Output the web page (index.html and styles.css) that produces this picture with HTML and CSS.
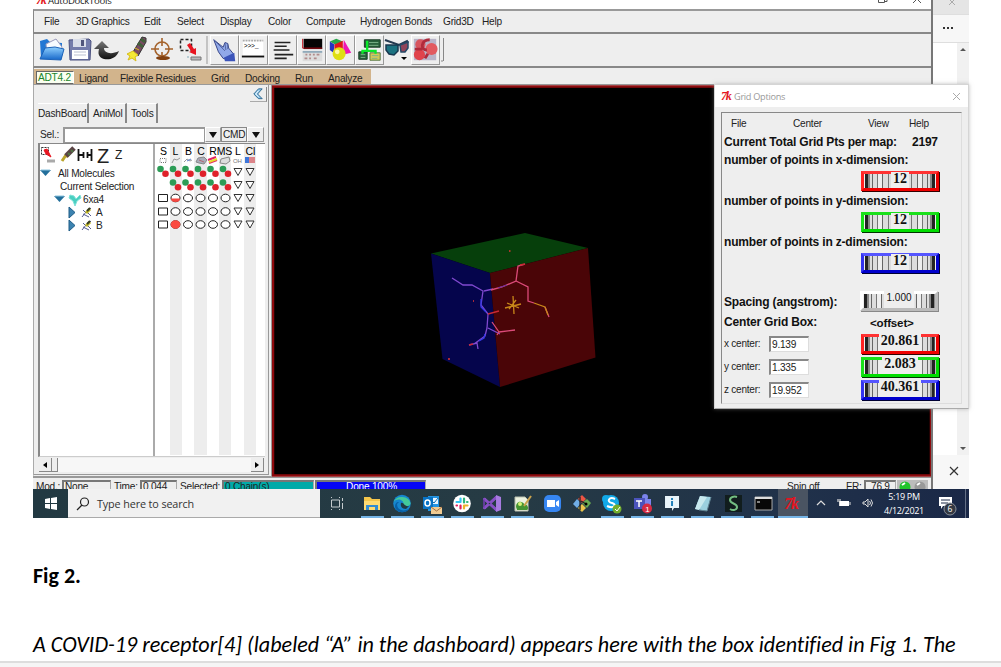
FILE: index.html
```html
<!DOCTYPE html>
<html lang="en">
<head>
<meta charset="utf-8">
<title>Fig 2</title>
<link rel="stylesheet" href="styles.css">
</head>
<body>
<main class="page">
<section class="shot">
  <div class="desktop">
    <div class="app">
      <header class="title"><i class="tk">7k</i><span>AutoDockTools</span>
        <svg class="winctl" width="60" height="9" viewBox="870 0 60 9"><path d="M877.500 0v2.500h6V0M884 1.500h2V0M912 3l4-4 4 4" fill="none" stroke="#555"/></svg>
      </header>
      <nav class="menu"><span class="w32">File</span><span class="w68">3D Graphics</span><span class="w33">Edit</span><span class="w43">Select</span><span class="w48">Display</span><span class="w38">Color</span><span class="w54">Compute</span><span class="w83">Hydrogen Bonds</span><span class="w39">Grid3D</span><span>Help</span></nav>
      <div class="tools">
        <svg width="173" height="30" viewBox="36 35 173 30">
          <defs><linearGradient id="fo" x2="0" y2="1"><stop stop-color="#8fd0ff"/><stop offset="1" stop-color="#1667c9"/></linearGradient>
          <linearGradient id="ar" x2="0" y2="1"><stop stop-color="#777"/><stop offset="1" stop-color="#111"/></linearGradient></defs>
          <path d="M39 41l7-2 3 3 12 1v15H40z" fill="#2277d4"/><path d="M45 44l10-5 6 8-1 7-14 1z" fill="#f7fbff" stroke="#99b"/><path d="M39 59l5-11 10-1 9 2-3 11z" fill="url(#fo)" stroke="#1c62b8"/>
          <path d="M68 40l20-1 2 2-1 19H69z" fill="#737cab" stroke="#4c5280"/><path d="M72 39h13v8H72z" fill="#d8dde9"/><path d="M80 40h3v6h-3z" fill="#50567c"/><path d="M71 50h16v9H71z" fill="#fff"/><path d="M73 52h12M73 55h12" stroke="#b9bfd0"/>
          <path d="M93 49l8-8 7 7h-5c0 5 7 7 15 3-3 8-10 9-15 8-6-2-6-6-5-10z" fill="url(#ar)"/>
          <path d="M132 52l9-15 4 1v4l-8 14z" fill="#7a4b63" stroke="#333"/><path d="M137 43l5 4M140 39l4 3" stroke="#42603a" stroke-width="3"/><path d="M126 54l6-3 5 4-3 2 1 4-4-3-4 2 2-4zM134 48l4 2" fill="#f5e935" stroke="#d7bd1d"/>
          <g fill="none" stroke="#a4622b" stroke-width="1.600"><circle cx="161" cy="49" r="7"/><path d="M161 38v8M161 52v8M150 49h8M164 49h8"/></g><ellipse cx="162" cy="58" rx="7" ry="2" fill="#82400f"/>
          <path d="M179.500 39.500h11v11h-11z" fill="none" stroke="#222" stroke-width="1.500" stroke-dasharray="3 2"/><path d="M186 45l3-2 4 6 2-1 0 7-7-3 2-1z" fill="#e81520"/><path d="M190 57h10v3h-10z" fill="#b7b9bb" stroke="#777"/><path d="M186 57h2" stroke="#81aaba"/><path d="M206 36v28" stroke="#999"/>
        </svg>
        <svg class="btn" width="29" height="30" viewBox="0 0 29 30"><path d="M3 4l10 8 2-5 3 1 1 5 5 6-3 7-8-2-5-7z" fill="#91a9e9" stroke="#303e83"/><path d="M3 4l12 12M15 8l1 7M18 9l0 5" stroke="#52639f"/><path d="M14 23l11-5 1 9H15z" fill="#3c55ba"/></svg>
        <svg class="btn" width="29" height="30" viewBox="0 0 29 30"><path d="M3 5h22v18H3z" fill="#fff"/><path d="M3 5h22" stroke="#aaa" stroke-width="2" stroke-dasharray="2 1"/><path d="M2 22h24" stroke="#111" stroke-width="2"/><text x="4" y="13" font-size="7" font-family="Liberation Mono">&gt;&gt;&gt;_</text></svg>
        <svg class="btn" width="29" height="30" viewBox="0 0 29 30"><path d="M6 7h17M6 11h13M5 15h17M6 20h20M6 24h13" stroke="#222" stroke-width="1.700"/></svg>
        <svg class="btn" width="29" height="30" viewBox="0 0 29 30"><path d="M6 3h20v11H6z" fill="#050505"/><path d="M5 3v10h21" fill="none" stroke="#c00b15"/><path d="M5 17h21v10H5z" fill="#ddd"/><path d="M5 17h21" stroke="#91aaba" stroke-width="2"/><path d="M8 20h2m2 0h2m2 0h2m2 0h3M7 24h3m2 0h2m3 0h3" stroke="#b18c8c" stroke-width="2"/></svg>
        <svg class="btn" width="29" height="30" viewBox="0 0 29 30"><path d="M3 6l7-3 7 3-7 4z" fill="#29a64a"/><path d="M3 6l5 3-1 9-4-3z" fill="#2334bf"/><path d="M8 9l9-4v12l-9 1z" fill="#df161c"/><path d="M18 4l8 14-9 2z" fill="#ef16b4"/><circle cx="13" cy="19" r="7" fill="#dede14"/><circle cx="11" cy="17" r="2.500" fill="#fff9a4"/></svg>
        <svg class="btn" width="29" height="30" viewBox="0 0 29 30"><path d="M9 4h17v8H9zM3 17h9v8H3z" fill="#28613b" stroke="#173822"/><path d="M15 18h11v8H15z" fill="#cfc95a" stroke="#574"/><path d="M12 5v11M7 19v-3h14v3" stroke="#0be929" stroke-width="2.500" fill="none"/><path d="M14 7h10M14 10h10M5 20h5M5 23h5M17 21h7M17 24h6" stroke="#7db48a"/></svg>
        <svg width="27" height="30" viewBox="0 0 27 30"><path d="M1 5l14 5 8-4 1 2" fill="none" stroke="#263a50" stroke-width="2"/><path d="M2 10l12 0 0 6-4 4-5-1-3-4z" fill="#1b7280" stroke="#18384f" stroke-width="1.500"/><path d="M16 10l8-3 0 6-3 4-4 0z" fill="#91455a" stroke="#244967" stroke-width="1.500"/><path d="M17 22h6l-3 3z"/></svg>
        <svg class="btn" width="29" height="30" viewBox="0 0 29 30"><path d="M2 3h24v23H2z" fill="#b9b4c8"/><circle cx="9" cy="9" r="5.500" fill="#d8555f"/><circle cx="8" cy="20" r="6" fill="#e0434c"/><circle cx="21" cy="14" r="6.500" fill="#e25a60"/><path d="M19 4q-7 0-8 6 0 5 5 5M3 14h8M17 19l-3 5" stroke="#b02a3b" stroke-width="3" fill="none"/></svg>
        <svg width="8" height="30"><path d="M3.500 3v23M3 26h-2" stroke="#888" fill="none"/></svg>
      </div>
      <div class="modules"><div class="tan"><b>ADT4.2</b><span class="w41">Ligand</span><span class="w91">Flexible Residues</span><span class="w34">Grid</span><span class="w50">Docking</span><span class="w33">Run</span><span>Analyze</span></div></div>
      <div class="work">
        <aside class="panel">
          <div class="collapse"><svg width="17" height="15" viewBox="0 0 17 15"><path d="M9 2L4 7.500l5 5h4l-5-5 5-5.500z" fill="#91caef" stroke="#28638a"/><path d="M9 4l-3 3.500 3 3" fill="none" stroke="#fff"/></svg></div>
          <div class="ptabs"><span class="t1">DashBoard</span><span class="t2">AniMol</span><span class="t3">Tools</span></div>
          <div class="sel"><span>Sel.:</span><div class="entry"></div><div class="drop"><svg width="8" height="6"><path d="M0 0h8L4 6z" fill="#111"/></svg></div><div class="cmd">CMD</div><div class="drop"><svg width="8" height="6"><path d="M0 0h8L4 6z" fill="#111"/></svg></div></div>
          <div class="board">
            <div class="tree">
              <div class="minis">
                <svg width="54" height="23" viewBox="40 144 54 23"><path d="M41.500 147.500h7v7h-7z" fill="none" stroke="#333" stroke-dasharray="2 1"/><path d="M44 150l3-1 4 8-5-3z" fill="#e81520" stroke="#e81520"/><path d="M47 161h8" stroke="#aaa" stroke-width="3"/><path d="M62 161l4-6M66 157l7-8" stroke="#bba52c" stroke-width="3"/><path d="M66 156l8-8" stroke="#5a4345" stroke-width="5"/><path d="M68 153l2 2M71 150l2 2" stroke="#507645" stroke-width="2"/><path d="M78.500 149v12M79 155h5M83.500 152v6M91.500 149v12M91 155h-4M87.500 152v6" stroke="#111" stroke-width="1.800"/></svg>
                <span class="z1">Z</span><span class="z2">Z</span>
              </div>
              <div class="row r0"><svg class="tri"><use href="#dn"/></svg>All Molecules</div>
              <div class="row r1">Current Selection</div>
              <div class="row r2"><svg class="tri"><use href="#dn"/></svg><svg width="14" height="13"><path d="M2 2l4 1 2 3 4-4 1 3-4 3-2 5-2-5-4-3z" fill="#49cfc0" stroke="#7de0d8"/></svg><span>6xa4</span></div>
              <div class="row r3"><svg class="tri"><use href="#rt"/></svg><svg class="mol"><use href="#mol"/></svg>A</div>
              <div class="row r3"><svg class="tri"><use href="#rt"/></svg><svg class="mol"><use href="#mol"/></svg>B</div>
            </div>
            <svg class="matrix" width="108" height="311" viewBox="155 144 108 311">
              <defs>
                <g id="dn"><path d="M0 3h11L5.500 9z" fill="#236f9b"/><path d="M1 3h9" stroke="#8dc5df"/></g>
                <g id="rt"><path d="M3 1l6 5.500L3 12z" fill="#3c83b0" stroke="#1e5c86"/></g>
                <g id="mol"><path d="M2 11l4-5 5-4M6 7l-3-3M7 6l4 4M3 8l6 3" stroke="#555b91" fill="none"/><path d="M6 7l4-4" stroke="#bdb425" stroke-width="3"/><path d="M7 5l3-3" stroke="#343a25" stroke-width="2"/></g>
                <g id="dots"><circle cx="-2.500" cy="-2.500" r="3.300" fill="#2c9c56"/><circle cx="2.500" cy="2.200" r="3.300" fill="#df222b"/></g>
                <ellipse id="o" rx="4.500" ry="3.800" fill="#fff" stroke="#222"/>
                <path id="v" d="M-4-3.500h8L0 3.500z" fill="#fff" stroke="#333"/>
                <path id="sq" d="M-4.500-3.500h9v7h-9z" fill="#fff" stroke="#222"/>
              </defs>
              <path d="M170 144h12v312h-12zM194 144h13v312h-13zM219 144h12v312h-12zM244 144h12v312h-12z" fill="#ededed"/>
              <g class="cols"><text x="163.500" y="155">S</text><text x="175.500" y="155">L</text><text x="188.500" y="155">B</text><text x="201" y="155">C</text><text x="213" y="155">R</text><text x="224.500" y="155">MS</text><text x="238" y="155">L</text><text x="250.500" y="155">Cl</text></g>
              <g fill="none"><path d="M160 158.500h6v4h-6z" stroke="#777" stroke-dasharray="1 1"/><path d="M172 163l2-4 3 1 3-2M184 162l3-3 3 2 2-1" stroke="#999"/><path d="M187 161l4-2" stroke="#587bd0"/><path d="M196 162l2-4 6-1 3 3-3 4-5-1z" fill="#a9adba" stroke="#888"/><path d="M199 160l5 2" stroke="#b56572"/><path d="M208 160l8-3M209 163l8-3" stroke="#e42363" stroke-width="2"/><path d="M209 162l8-3" stroke="#e4db2d" stroke-width="2"/><path d="M220 163l1-4 8-2 1 4-4 3z" stroke="#888" fill="#ddd"/><path d="M245 157h10v6h-10z" fill="#3d76da"/><path d="M249 157h6v6h-6z" fill="#dc8489"/></g><text x="233" y="163" font-size="6" fill="#777" font-family="Liberation Sans">OH</text>
              <g><use href="#dots" x="163" y="171.500"/><use href="#dots" x="175.500" y="171.500"/><use href="#dots" x="188" y="171.500"/><use href="#dots" x="200.500" y="171.500"/><use href="#dots" x="213" y="171.500"/><use href="#dots" x="225.500" y="171.500"/>
              <use href="#dots" x="175.500" y="185"/><use href="#dots" x="188" y="185"/><use href="#dots" x="200.500" y="185"/><use href="#dots" x="213" y="185"/><use href="#dots" x="225.500" y="185"/></g>
              <g id="line"><use href="#sq" x="163" y="198"/><use href="#o" x="175.500" y="198"/><use href="#o" x="188" y="198"/><use href="#o" x="200.500" y="198"/><use href="#o" x="213" y="198"/><use href="#o" x="225.500" y="198"/></g>
              <use href="#line" y="13.500"/><use href="#line" y="26.500"/>
              <g id="vv"><use href="#v" x="238" y="172"/><use href="#v" x="250" y="172"/></g><use href="#vv" y="13"/><use href="#vv" y="26"/><use href="#vv" y="39.500"/><use href="#vv" y="52.500"/>
              <path d="M171 198.500h9a4.500 3.500 0 0 1-9 0z" fill="#f54740"/><ellipse cx="175.500" cy="224.500" rx="4.800" ry="4.200" fill="#fa4a40"/>
            </svg>
          </div>
          <div class="hscroll"><span class="sb"><svg width="4" height="6"><path d="M4 0v6L0 3z"/></svg></span><span class="thumb"></span><span class="trough"></span><span class="sb"><svg width="4" height="6"><path d="M0 0v6l4-3z"/></svg></span></div>
        </aside>
        <svg class="viewer" width="660" height="392" viewBox="272 85 660 392">
          <path d="M273 86.500h658v389H273z" fill="#000" stroke="#8d0b0e" stroke-width="2.500"/>
          <path d="M431 253.500L525 233l63 15-98 25z" fill="#063f0b"/><path d="M431 253.500l59 19.500 10 114-57.500-28z" fill="#05054c"/><path d="M490 273l98-25 7.500 109.500L500 387z" fill="#4a0507"/>
          <g fill="none" stroke-width="1.300"><path d="M452 278l11 7h9l11 6-2 14 7 9-1 14-2 8-11 8M469 345l8-2 1 6M488 328l12 6M484 291l9-2" stroke="#8049cf"/><path d="M481 299v8l5 5M485 334l-1 4-5 3" stroke="#3439e8"/><path d="M491 290l11-3 14-6 2-15 7-2M516 281l12 6v14l6 2M545 307l4 10M499 332l16-2M499 332l-7-10M499 332l-2 3" stroke="#db4b79"/><path d="M498 288l9-3" stroke="#6e319c"/><path d="M488 314l11-3M469 345l4-1M520 265l5-1" stroke="#c92935"/><path d="M534 303l11 4 3 8M513 296l1 18M505 308l16-4M507 303l12 5M516 300l-7 9" stroke="#c88719"/></g>
          <path d="M509 251h1.500M473 301h1M448 359h2" stroke="#e03535" stroke-width="1.500"/>
        </svg>
      </div>
      <footer class="status"><span class="w26">Mod.:</span><span class="sunk w52">None</span><span class="w26">Time:</span><span class="sunk w40">0.044</span><span class="w42">Selected:</span><span class="sunk teal">0 Chain(s)</span><span class="sunk blue">Done 100%</span><span class="spin">Spin off</span><span class="fr">FR:</span><span class="sunk fps">76.9</span><svg width="31" height="12" viewBox="0 0 31 12"><path d="M0 1h31v11H0z" fill="#bcbcbc"/><circle cx="8" cy="8" r="5.500" fill="#20c52b"/><circle cx="23" cy="8" r="5.500" fill="#999"/><path d="M5 6l3-2M20 6l3-2" stroke="#fff" stroke-width="2"/></svg></footer>
    </div>
    <svg class="browser" width="36" height="489" viewBox="933 0 36 489"><path d="M933 0h36v489h-36z" fill="#fff"/><path d="M933 0h36v14h-36z" fill="#e5e5e5"/><path d="M933 14h36v28h-36z" fill="#f7f7f7"/><path d="M933 14.500h36M933 42.500h36" stroke="#dedede"/><path d="M957 43h12v412h-12z" fill="#f1f1f1"/><path d="M933 455h36v34h-36z" fill="#f7f7f7"/><path d="M960 51l3-3 3 3zM960 447l3 3 3-3z" fill="#555"/><path d="M943 27h2v2h-2zM947 27h2v2h-2zM951 27h2v2h-2z" fill="#333"/><path d="M949-1l6 6M955-1l-6 6" stroke="#aaa"/><path d="M950 467l8 8M958 467l-8 8" stroke="#333" stroke-width="1.200"/></svg>
  </div>
  <div class="taskbar">
    <div class="start"><svg width="35" height="29" viewBox="33 489 35 29"><path d="M45 499l5-1v5h-5zM51 498l6-1v6h-6zM45 504h5v5l-5-1zM51 504h6v6l-6-1z" fill="#fff"/></svg></div>
    <div class="search"><svg width="29" height="29" viewBox="68 489 29 29"><circle cx="84.500" cy="502" r="4" fill="none" stroke="#222" stroke-width="1.200"/><path d="M82 505l-5 5" stroke="#222" stroke-width="1.300"/></svg>Type here to search</div>
    <svg class="view" width="37" height="29" viewBox="0 0 36 29"><path d="M11 11h8v7h-8zM11 8v1m8-1v1M11 20v1m8-1v1M22 9v3m0 2v6" fill="none" stroke="#c5cbce"/></svg>
    <div class="pins">
      <svg class="pin on" viewBox="0 0 30 29"><path d="M7 8h6l2 2h8v11H7z" fill="#f5c64b"/><path d="M7 12h16v9H7z" fill="#ffdb72"/><path d="M9 21v-5h12v5h-3v-3h-6v3z" fill="#328cd2"/></svg>
      <svg class="pin on" viewBox="0 0 30 29"><circle cx="15" cy="14.500" r="8.800" fill="#1686ce"/><path d="M6.500 13a9 8 0 0 1 17 1c0 4-7 4-7 1 0-5-7-6-10-2z" fill="#43c99a"/><path d="M10 15c0 6 6 8 12 5-3 5-13 4-14-2 0-3 1-5 4-5z" fill="#0860a5"/><path d="M14 14c3-1 3 4 8 3l-3 3c-4 0-6-3-5-6z" fill="#213a43"/></svg>
      <svg class="pin on" viewBox="0 0 30 29"><path d="M11 7h11v15H11z" fill="#2494e2"/><path d="M14 9h7v6h-7z" fill="#e8f5ff"/><path d="M6 8h10v12H6z" fill="#0872c4"/><ellipse cx="10.500" cy="14" rx="2.500" ry="3" fill="none" stroke="#fff" stroke-width="1.500"/><path d="M14 18h11v7H14z" fill="#f1cb91"/><path d="M14 18l5.500 4 5.500-4" stroke="#a17043" fill="none"/><path d="M15 12l2 2 4-5" stroke="#0b6eb5" fill="none"/></svg>
      <svg class="pin on" viewBox="0 0 30 29"><circle cx="15" cy="14.500" r="8.800" fill="#fff"/><g stroke-width="2.200" stroke-linecap="round"><path d="M13.500 9.500v3M9.500 13h4" stroke="#36c5f0"/><path d="M17 9.500v4M20 13h.5" stroke="#2eb67d"/><path d="M17 19.500v-3M17 16.500h3.500" stroke="#ecb22e"/><path d="M13.500 19.500v-3M9.500 16.500h.5" stroke="#e01e5a"/></g></svg>
      <svg class="pin on" viewBox="0 0 30 29"><path d="M6 10l2-1 12 11-1 2zM6 19l2 1L20 9l-1-2z" fill="#8950c7" stroke="#8950c7"/><path d="M19 6l5 2v13l-5 2z" fill="#a77be0"/><path d="M7 10v9" stroke="#7540b7" stroke-width="1.500"/></svg>
      <svg class="pin on" viewBox="0 0 30 29"><path d="M8 8h10l3 3v11H8z" fill="#edf2df" stroke="#bbc1b0"/><path d="M9 18c0-7 7-6 8-3 4 0 5 5 3 6H10z" fill="#459432"/><circle cx="13" cy="15" r="2" fill="#d6f278"/><path d="M17 17l7-10" stroke="#caa34d" stroke-width="2"/></svg>
      <svg class="pin" viewBox="0 0 30 29"><rect x="7" y="6" width="17" height="17" rx="5" fill="#3686f2"/><path d="M10 11h8v7h-8zM19 13l3-2v7l-3-2z" fill="#fff"/></svg>
      <svg class="pin" viewBox="0 0 30 29"><path d="M15 6l4 4-4 4-4-4z" fill="#ec5544"/><path d="M10 10l4 4-4 5-4-4z" fill="#71aee6"/><path d="M20 10l4 4-4 5-5-5z" fill="#69aa51"/><path d="M15 15l4 4-4 4-4-4z" fill="#eac44b"/><path d="M13 8v13M14 12l5 3" stroke="#222" stroke-width="1.300"/><circle cx="19" cy="15" r="1.500"/></svg>
      <svg class="pin on" viewBox="0 0 30 29"><circle cx="14" cy="14" r="8" fill="#12a9e8"/><circle cx="9" cy="10" r="4" fill="#12a9e8"/><path d="M18 10c-6-3-9 3-3 4 6 2 1 6-5 3" fill="none" stroke="#fff" stroke-width="2"/><circle cx="20" cy="20" r="4.500" fill="#73ae2d"/><path d="M18 20l2 2 3-4" fill="none" stroke="#fff"/></svg>
      <svg class="pin on" viewBox="0 0 30 29"><path d="M15 10h9v10h-9z" fill="#7b83eb"/><circle cx="18" cy="8" r="3" fill="#7b83eb"/><path d="M7 9h11v11H7z" fill="#4b53bc"/><path d="M9 12h6M12 12v6" stroke="#fff" stroke-width="1.500"/><circle cx="20" cy="19.500" r="5" fill="#d52b42"/><text x="18.200" y="22.500" fill="#fff" font-family="Liberation Sans" font-size="8">1</text></svg>
      <svg class="pin on" viewBox="0 0 30 29"><path d="M8 7h14v12h-5l-2 3v-3H8z" fill="#e9f4fa"/><path d="M15 9v2m0 1v5" stroke="#2280b9" stroke-width="2"/></svg>
      <svg class="pin on" viewBox="0 0 30 29"><path d="M12 7l11 1-4 14-12-2z" fill="#9bd0df"/><path d="M12 7l7 1-8 13-4-1z" fill="#c9e9ee"/><path d="M23 8l-4 14-8-1" fill="none" stroke="#5f8291"/></svg>
      <svg class="pin on" viewBox="0 0 30 29"><path d="M7 6h17v17H7z" fill="#111d1d"/><path d="M19 8c-3-1-7 0-7 3 0 4 7 3 7 7 0 3-4 4-7 2" fill="none" stroke="#73be82" stroke-width="2"/></svg>
      <svg class="pin on" viewBox="0 0 30 29"><path d="M7 8h17v13H7z" fill="#080808" stroke="#aaa"/><path d="M7 9h17" stroke="#ddd" stroke-width="2"/><path d="M9 13h3" stroke="#fff"/></svg>
      <div class="pin on active"><i class="tk">7k</i></div>
    </div>
    <svg class="tray" width="73" height="29" viewBox="808 489 73 29"><path d="M817 505l4-4 4 4M838 499v3m2-3v3" fill="none" stroke="#ddd" stroke-width="1.200"/><path d="M840 501h9v5h-9z" fill="#fff"/><path d="M839.500 501v5M850 502v3" stroke="#ddd"/><path d="M863 502h2l3-3v8l-3-3h-2zM869.500 501q2 2 0 4M871 499.500q3 3.500 0 7" fill="none" stroke="#ddd"/></svg>
    <div class="clock"><span>5:19 PM</span><span>4/12/2021</span></div>
    <svg width="42" height="29" viewBox="927 489 42 29"><path d="M939 497h13v9h-9l-2 3v-3h-2z" fill="#fff"/><path d="M941 500h9M941 503h7" stroke="#1b2946"/><circle cx="950" cy="509" r="6" fill="#343943" stroke="#89909b"/><text x="947.500" y="512" fill="#fff" font-family="Open Sans" font-size="8.500">6</text><path d="M965.500 489v29" stroke="#647085"/></svg>
  </div>
  <section class="dialog">
    <header><i class="tk">7k</i><span>Grid Options</span><svg width="9" height="9"><path d="M1 1l7 7M8 1L1 8" stroke="#aaa"/></svg></header>
    <div class="opts">
      <nav><span class="w62">File</span><span class="w75">Center</span><span class="w41">View</span><span>Help</span></nav>
      <div class="total"><b>Current Total Grid Pts per map:</b><b>2197</b></div>
      <div class="dim"><b>number of points in x-dimension:</b><div class="wheel red"><i></i><em>12</em><i></i></div></div>
      <div class="dim"><b>number of points in y-dimension:</b><div class="wheel green"><i></i><em>12</em><i></i></div></div>
      <div class="dim"><b>number of points in z-dimension:</b><div class="wheel navy"><i></i><em>12</em><i></i></div></div>
      <div class="space"><b>Spacing (angstrom):</b><div class="wheel gray"><i></i><em>1.000</em><i></i></div></div>
      <div class="cgb"><b>Center Grid Box:</b><b class="offset">&lt;offset&gt;</b></div>
      <div class="cen"><span>x center:</span><div class="field">9.139</div><div class="wheel red"><i></i><em>20.861</em><i></i></div></div>
      <div class="cen"><span>y center:</span><div class="field">1.335</div><div class="wheel green"><i></i><em>2.083</em><i></i></div></div>
      <div class="cen"><span>z center:</span><div class="field">19.952</div><div class="wheel navy"><i></i><em>40.361</em><i></i></div></div>
    </div>
  </section>
</section>
<h2>Fig 2.</h2>
<p class="caption">A COVID-19 receptor[4] (labeled “A” in the dashboard) appears here with the box identified in Fig 1. The</p>
<div class="edge"></div>
</main>
</body>
</html>
```
FILE: styles.css
```css
*{box-sizing:border-box}
body{margin:0;background:#fff}
svg{display:block;flex:none}
.page{width:1001px;height:667px;overflow:hidden;display:flex;flex-direction:column;background:#fff}
.shot{position:relative;flex:none;width:936px;height:518px;margin-left:33px;font:10.1px "Liberation Sans",Arial,sans-serif;letter-spacing:-.22px;color:#222;white-space:nowrap}
.desktop{display:flex;height:489px;overflow:hidden}
.app{width:900px;height:489px;background:#eee;display:flex;flex-direction:column;border-right:2px solid #777}
.app span,.dialog span{flex:none}
.title{height:9px;background:#fff;display:flex;overflow:hidden;padding-left:3px;font:9.6px/12px "Open Sans",sans-serif;letter-spacing:-.3px}
.title span{margin:-5px 0 0 0}
.title .tk{margin-top:-6px}
.winctl{margin-left:auto}
.tk{font:italic bold 12px/12px "Liberation Serif",serif;color:#e31520;letter-spacing:-1.2px;width:12px;flex:none}
.menu{height:25px;display:flex;align-items:center;padding:0 0 0 10px;border:1px solid #888;border-width:2px 0 2px 1px;border-top-color:#999}
.w26{width:26px}.w32{width:32px}.w33{width:33px}.w34{width:34px}.w38{width:38px}.w39{width:39px}.w40{width:37px}.w41{width:41px}.w42{width:42px}.w43{width:43px}.w48{width:48px}.w50{width:50px}.w52{width:52px}.w54{width:54px}.w62{width:62px}.w68{width:68px}.w75{width:75px}.w83{width:83px}.w91{width:91px}
.tools{height:34px;display:flex;align-items:center;padding:0 3px;border-bottom:2px solid #888;border-left:1px solid #999}
.btn{border:1px solid #999;border-top-color:#fff;border-left-color:#fff}
.modules{height:17px;border-bottom:1px solid #999;border-left:1px solid #999;padding-top:1px}
.tan{width:337px;height:15px;background:#d2b48c;display:flex;align-items:center;padding:3px 0 0 2px}
.tan b{width:38px;height:13px;background:#fafff0;border:1px solid #666;border-right-color:#fff;color:#20852b;font-weight:400;line-height:12px;padding-left:1px;margin-right:5px;margin-top:-1px}
.work{height:392px;display:flex;overflow:hidden}
.panel{width:239px;height:392px;display:flex;flex-direction:column;border-left:1px solid #aaa;border-right:4px double #999;border-bottom:3px double #999;flex:none;padding-left:3px}
.collapse{height:18px;display:flex;justify-content:flex-end;padding:2px 1px 0}
.collapse svg{border-bottom:1px solid #aaa;border-right:1px solid #888}
.ptabs{height:22px;display:flex;line-height:20px;padding-left:1px}
.ptabs span{border-right:2px solid #888;border-top:1px solid #fff;height:20px}
.t1{width:51px}.t2{width:38px;padding-left:4px}.t3{width:31px;padding-left:4px}
.sel{height:18px;display:flex;align-items:center;padding:1px 0 0 3px}
.sel>span{width:23px}
.entry{width:142px;height:16px;background:#fff;border:1px solid #999;border-width:2px 1px 1px 2px}
.drop{width:16px;height:15px;display:flex;align-items:center;justify-content:center;border:1px solid #999;border-top-color:#fff;border-left-color:#fff}
.cmd{width:26px;height:15px;line-height:13px;border:1px solid #888;padding-left:1px}
.cmd+.drop{width:17px}
.board{height:314px;width:227px;display:flex;background:#fff;border-left:2px solid #888;border-top:1px solid #888;border-bottom:1px solid #ccc;margin-left:1px}
.tree{width:115px;border-right:2px solid #aaa;display:flex;flex-direction:column;overflow:hidden}
.minis{height:23px;display:flex}
.z1{font-size:20px;line-height:24px;width:17px;padding-left:3px;letter-spacing:0}
.z2{font-size:12px;line-height:23px;padding-left:4px}
.row{height:13.1px;display:flex;align-items:center}
.tri{width:11px;height:13px}
.mol{width:13px;height:13px}
.r0{gap:7px}.r1{padding-left:20px}.r2{padding-left:14px;gap:3px}.r3{padding-left:26px;gap:3px}
.r2 svg+svg{margin-right:-2px}
.cols{font-size:10.5px;text-anchor:middle;letter-spacing:0}
.matrix{width:108px}
.hscroll{height:14px;display:flex;width:225px;margin:1px 0 0 2px;background:#f7f7f7}
.sb{width:13px;display:flex;align-items:center;justify-content:center;background:#eee;border-right:1px solid #888;border-bottom:1px solid #888}
.thumb{width:6px;background:#eee;border-right:1px solid #888;border-bottom:1px solid #888}
.hscroll .trough{flex:1}
.status{height:12px;display:flex;overflow:hidden;border-top:1px solid #999;padding:2px 0 0 3px;line-height:14px}
.status span{height:17px}
.status .sunk{border:1px solid #aaa;border-top:2px solid #777;border-left:2px solid #777;line-height:10px;padding-left:1px;margin-right:0}
.status .w52{width:49px;margin-right:3px}.status .w40{margin-right:3px}
.status .teal{width:92px;background:#00aaa8}
.status .blue{width:111px;background:#0505f5;color:#fff;text-align:center;margin-left:1px}
.spin{width:59px;margin-left:361px}
.fr{width:18px}
.status .fps{width:32px;padding-left:5px}
.status svg{margin-top:-1px;margin-left:1px}
.taskbar{height:29px;display:flex;background:linear-gradient(90deg,#223942 0%,#263b44 50%,#20314a 82%,#1a2847 100%);font-family:"Open Sans",sans-serif}
.start{width:35px}
.search{width:252px;background:#f1f1f1;display:flex;align-items:center;color:#333;font-size:10.8px;letter-spacing:-.12px;border-bottom:1px solid #aaa}
.pins{display:flex;width:451px}
.pin{width:30.06px;height:29px;flex:none}
.on{background:linear-gradient(#75b4e6,#75b4e6) center bottom/23px 2px no-repeat}
.active{background-color:#4a5462;display:flex;align-items:center;justify-content:center;background-size:30px 2px}
.active .tk{font-size:16px;width:17px}
.clock{width:46px;display:flex;flex-direction:column;align-items:center;color:#fff;font-size:9px;line-height:14px;letter-spacing:-.3px;padding-top:1px}
.dialog{position:absolute;left:681px;top:84px;width:255px;height:325px;background:#eee;border:1px solid #d5d5d5;border-bottom-color:#aaa;box-shadow:0 0 4px #8888}
.dialog header{height:22px;display:flex;align-items:center;background:#fff;padding:0 7px 0 6px;color:#999;font:9.2px "Open Sans",sans-serif;letter-spacing:-.3px}
.dialog header span{margin-left:1px}
.dialog header svg{margin-left:auto}
.opts{margin:5px 6px 0;height:292px;border:1px solid #ddd;border-top:1px solid #888;border-left:1px solid #888;display:flex;flex-direction:column;padding-left:2px}
.opts nav{height:20px;display:flex;align-items:center;padding-left:7px;flex:none}
.opts b{font-size:12px;letter-spacing:-.18px;color:#111}
.total{height:18px;display:flex;align-items:center;gap:15px;flex:none;margin-bottom:1px}
.dim{height:41px;display:flex;flex-direction:column;flex:none;line-height:17px}
.dim .wheel{margin:2px 0 0 137px}
.wheel{width:78px;height:20px;border:3px solid;display:flex;padding:0 1px;flex:none;line-height:14px}
.wheel i{flex:1;height:14px;background:linear-gradient(90deg,#222 0 3px,#888 3px 5px,#ddd 5px 7px,#666 7px 8px,#ddd 8px 12px,#777 12px 13px,#eee 13px 17px,#666 17px 18px,#ddd 18px 23px,#777 23px 24px,#ddd 24px)}
.wheel i:last-child{transform:scaleX(-1)}
.wheel em{font:bold 14px/13px "Liberation Serif",serif;letter-spacing:0;background:#eee;margin-top:-3px;height:17px;padding:0 2px;color:#111}
.red{background:#eee;border-color:#f33 #e00 #e00 #f22;box-shadow:1px 1px 0 #300}
.green{background:#eee;border-color:#1ae01a #0d0 #0d0 #1ae01a;box-shadow:1px 1px 0 #030}
.navy{background:#eee;border-color:#55f #00c #00c #33e;box-shadow:1px 1px 0 #003}
.dim .wheel em{margin-top:-2px;height:16px}
.gray{border-color:#fff #bbb #bbb #fff;box-shadow:1px 1px 0 #888}
.wheel.gray em{font:10px/14px "Liberation Sans",sans-serif}
.space{height:36px;display:flex;align-items:flex-end;justify-content:space-between;padding-right:23px;line-height:17px;flex:none}
.space .wheel{margin-bottom:0}
.cgb{height:22px;display:flex;align-items:center;flex:none}
.cgb b{width:146px}
.cgb b.offset{width:auto;font-size:11.6px}
.cen{height:23px;display:flex;align-items:center;flex:none;margin-top:-1px;margin-bottom:1px}
.cen>span{width:45px;font-size:10px}
.field{width:40px;height:16px;background:#fff;border:1px solid #ddd;border-top:2px solid #888;border-left:2px solid #888;line-height:14px;padding-left:1px;margin-right:52px}
h2{font:bold 22px/24px Carlito,Lato,sans-serif;margin:46px 0 0 33px;color:#000;flex:none}
.caption{font:italic 22.12px/28px Carlito,Lato,sans-serif;font-variant-ligatures:none;margin:43px 0 0 33px;color:#000;white-space:nowrap;flex:none}
.edge{height:6px;margin-top:2px;background:#f5f5f5;border-top:2px solid #ddd;flex:none}
```
